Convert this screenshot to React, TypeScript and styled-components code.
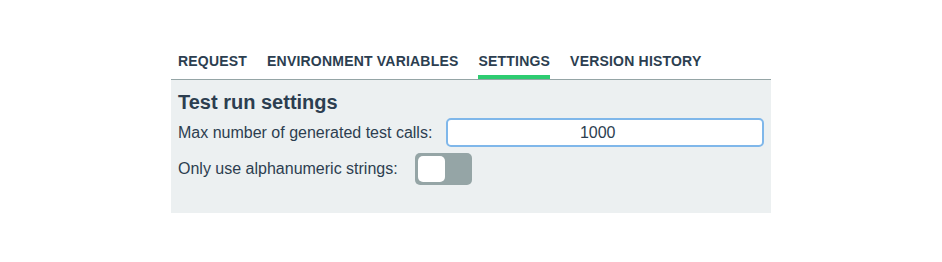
import React, { useState } from "react";
import styled, { createGlobalStyle } from "styled-components";

const GlobalStyle = createGlobalStyle`
  html, body {
    margin: 0;
    padding: 0;
    background: #ffffff;
    font-family: "Liberation Sans", Arial, Helvetica, sans-serif;
    color: #2c3e50;
  }
  input[type="number"]::-webkit-inner-spin-button {
    opacity: 0;
  }
`;

const Page = styled.div`
  width: 600px;
  margin-left: 171px;
  padding-top: 53px;
`;

const TabBar = styled.div`
  display: flex;
  gap: 20px;
  padding: 0 7px;
  border-bottom: 1px solid #95a5a6;
`;

const Tab = styled.div<{ $active?: boolean }>`
  font-size: 14px;
  line-height: 16px;
  font-weight: 700;
  letter-spacing: 0.2px;
  color: #2c3e50;
  padding-bottom: 6px;
  border-bottom: 4px solid ${(p) => (p.$active ? "#2ecc71" : "transparent")};
  cursor: pointer;
`;

const Panel = styled.div`
  background: #ecf0f1;
  padding: 11px 7px 28px;
  display: flex;
  flex-direction: column;
`;

const Heading = styled.h3`
  margin: 0 0 4px;
  font-size: 20px;
  line-height: 23px;
  font-weight: 700;
  color: #2c3e50;
`;

const Row = styled.div<{ $mb?: number; $gap?: number }>`
  display: flex;
  align-items: center;
  gap: ${(p) => p.$gap ?? 14}px;
  margin-bottom: ${(p) => p.$mb ?? 0}px;
`;

const Label = styled.label`
  font-size: 16px;
  line-height: 18px;
  color: #2c3e50;
  white-space: nowrap;
`;

const NumberInput = styled.input`
  box-sizing: border-box;
  width: 318px;
  height: 29px;
  border: 2px solid #7fb7ea;
  border-radius: 5px;
  background: #ffffff;
  font-family: "Liberation Sans", Arial, sans-serif;
  font-size: 16px;
  color: #2c3e50;
  text-align: center;
  padding: 0 2px;
  outline: none;
`;

const Toggle = styled.button<{ $on: boolean }>`
  position: relative;
  width: 57px;
  height: 32px;
  border: none;
  border-radius: 5px;
  padding: 0;
  background: ${(p) => (p.$on ? "#2ecc71" : "#95a5a6")};
  cursor: pointer;
`;

const Knob = styled.span<{ $on: boolean }>`
  position: absolute;
  top: 3px;
  left: ${(p) => (p.$on ? "27px" : "3px")};
  width: 27px;
  height: 26px;
  border-radius: 5px;
  background: #ffffff;
`;

export default function App() {
  const [tab, setTab] = useState("SETTINGS");
  const [on, setOn] = useState(false);
  const tabs = ["REQUEST", "ENVIRONMENT VARIABLES", "SETTINGS", "VERSION HISTORY"];
  return (
    <>
      <GlobalStyle />
      <Page>
        <TabBar>
          {tabs.map((t) => (
            <Tab key={t} $active={t === tab} onClick={() => setTab(t)}>
              {t}
            </Tab>
          ))}
        </TabBar>
        <Panel>
          <Heading>Test run settings</Heading>
          <Row $mb={6}>
            <Label>Max number of generated test calls:</Label>
            <NumberInput type="number" defaultValue={1000} />
          </Row>
          <Row $gap={17}>
            <Label>Only use alphanumeric strings:</Label>
            <Toggle $on={on} onClick={() => setOn(!on)} aria-label="toggle">
              <Knob $on={on} />
            </Toggle>
          </Row>
        </Panel>
      </Page>
    </>
  );
}
